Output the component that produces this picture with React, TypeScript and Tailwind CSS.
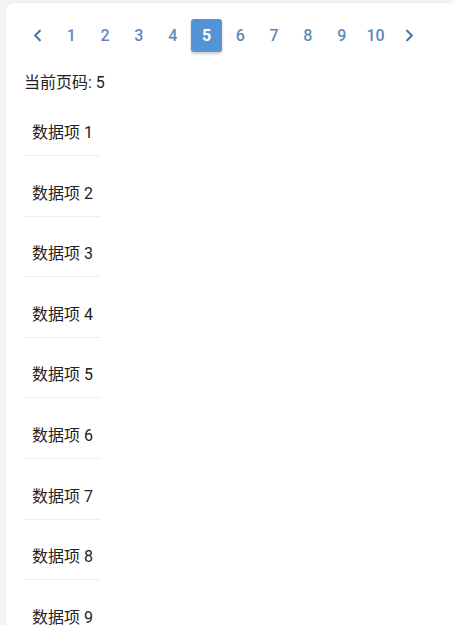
import { ChevronLeft, ChevronRight } from 'lucide-react';

const pages = [1, 2, 3, 4, 5, 6, 7, 8, 9, 10];
const current = 5;
const items = [1, 2, 3, 4, 5, 6, 7, 8, 9, 10];

export default function App() {
  return (
    <div className="h-[625px] overflow-hidden bg-[#f4f4f5] pl-[6px] pt-[3px] font-['Roboto','Noto_Sans_CJK_SC',sans-serif] text-[#222]">
      <div className="min-h-[700px] rounded-tl-[8px] bg-white pl-[18px] pt-[16px] shadow-[0_0_3px_rgba(0,0,0,0.06)]">
        <nav className="-ml-[2px] flex items-center gap-[2.8px]">
          <button className="flex h-[33px] w-[31px] items-center justify-center text-[#4a78a8]">
            <ChevronLeft size={19} strokeWidth={2.7} />
          </button>
          {pages.map((p) =>
            p === current ? (
              <button
                key={p}
                className="flex h-[33px] w-[31px] items-center justify-center rounded-[3px] bg-[#5394d6] text-[16px] font-bold text-white shadow-[0_2px_3px_rgba(0,0,0,0.2)]"
              >
                {p}
              </button>
            ) : (
              <button
                key={p}
                className="flex h-[33px] w-[31px] items-center justify-center text-[16px] font-medium text-[#5f8ab8]"
              >
                {p}
              </button>
            )
          )}
          <button className="flex h-[33px] w-[31px] items-center justify-center text-[#4a78a8]">
            <ChevronRight size={19} strokeWidth={2.7} />
          </button>
        </nav>
        <p className="mt-[19px] text-[16px] leading-[24px]">当前页码: {current}</p>
        <ul className="mt-[16px]">
          {items.map((i) => (
            <li key={i} className="mb-[15.6px] w-fit border-b border-[#eeeeee] px-[8px] py-[10px] text-[16px] leading-[24px]">
              数据项 {i}
            </li>
          ))}
        </ul>
      </div>
    </div>
  );
}
